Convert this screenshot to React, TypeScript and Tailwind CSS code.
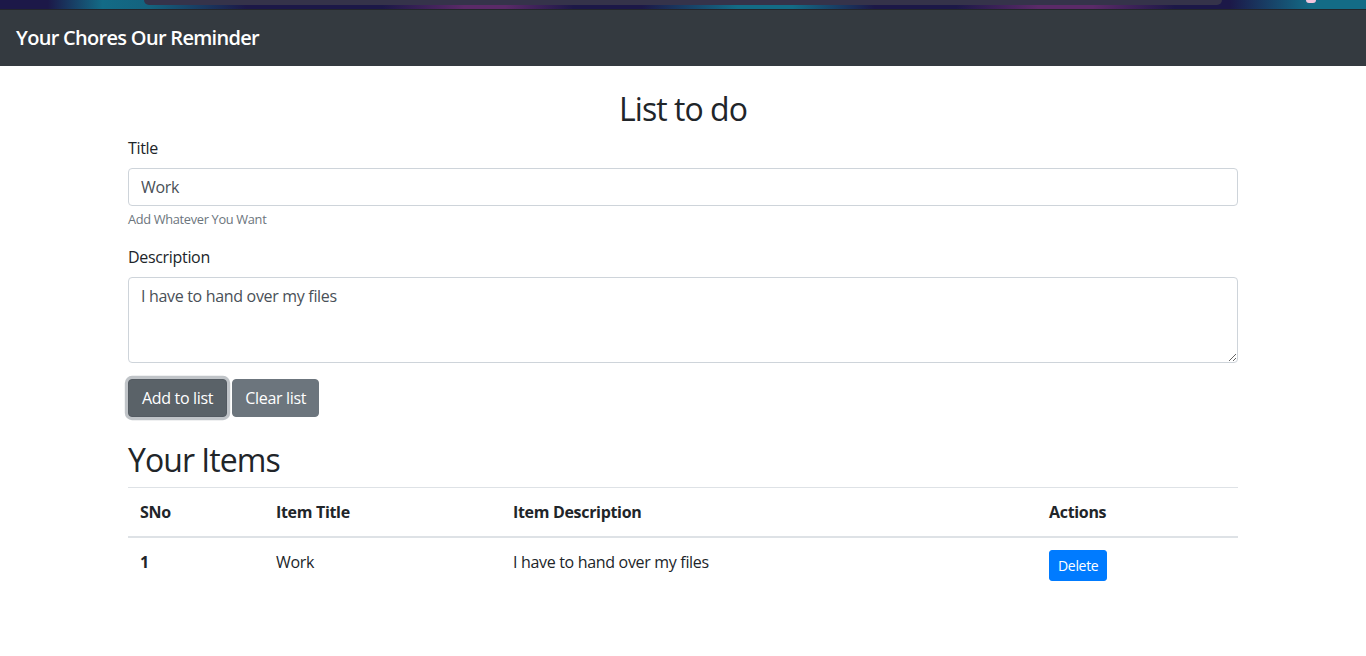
import React from "react";

const font = { fontFamily: '"Open Sans", "Noto Sans", sans-serif' };

function TopStrip() {
  return (
    <div className="relative h-[10px] w-full bg-[linear-gradient(90deg,#1c1848_0%,#1c1848_3.5%,#136b86_7.5%,#14627e_11%,#1c1848_18%,#1c1848_28%,#5b2a68_34%,#5a2a68_37%,#1c1848_42%,#1c1848_47%,#136b86_54%,#136b86_58%,#1c1848_64%,#1c1848_70%,#5b2a68_76%,#5b2a68_80%,#1c1848_86%,#1c1848_90%,#136b86_96%,#136b86_100%)]">
      <div className="flex h-[9px] px-[144px]">
        <div className="h-[5px] flex-1 rounded-b-[8px] bg-[#35334a]" />
      </div>
      <div className="h-px bg-[#23252b]" />
      <div className="absolute right-[50px] top-0 h-[3px] w-[10px] rounded-b-full bg-[#f3c6de]" />
    </div>
  );
}

export default function App() {
  return (
    <div
      className="min-h-screen bg-white tracking-[-0.02em] text-[#212529]"
      style={font}
    >
      <TopStrip />
      <nav className="flex h-[56px] items-center bg-[#343a40] px-4">
        <span className="text-[20px] font-semibold leading-[30px] tracking-[-0.035em] text-white">
          Your Chores Our Reminder
        </span>
      </nav>

      <div className="mx-auto w-[1110px]">
        <h2 className="mb-2 mt-6 text-center text-[32px] font-medium leading-[38px] tracking-[-0.03em]">
          List to do
        </h2>

        <div className="mb-4">
          <label className="mb-2 block text-base leading-6">Title</label>
          <input
            type="text"
            defaultValue="Work"
            className="block h-[38px] w-full rounded-[4px] border border-[#ced4da] px-3 text-base leading-6 text-[#495057] outline-none"
          />
          <small className="mt-1 block text-[12.8px] leading-[19px] text-[#6c757d]">
            Add Whatever You Want
          </small>
        </div>

        <div className="mb-4">
          <label className="mb-2 block text-base leading-6">Description</label>
          <textarea
            rows={3}
            defaultValue="I have to hand over my files"
            className="block h-[86px] w-full rounded-[4px] border border-[#ced4da] px-3 py-[6px] text-base leading-6 tracking-[-0.02em] text-[#495057] outline-none"
          />
        </div>

        <div className="flex gap-[5px]">
          <button className="h-[38px] rounded-[4px] border border-[#545b62] bg-[#5a6268] px-[13px] text-base leading-6 text-white shadow-[0_0_0_3.2px_rgba(130,138,145,0.5)]">
            Add to list
          </button>
          <button className="h-[38px] rounded-[4px] border border-[#6c757d] bg-[#6c757d] px-3 text-base leading-6 text-white">
            Clear list
          </button>
        </div>

        <h2 className="mb-2 mt-6 text-[32px] font-medium leading-[38px] tracking-[-0.03em]">
          Your Items
        </h2>

        <table className="w-full border-collapse text-left text-base">
          <thead>
            <tr>
              <th className="w-[136px] border-b-2 border-t border-[#dee2e6] p-3 font-bold leading-6">
                SNo
              </th>
              <th className="w-[237px] border-b-2 border-t border-[#dee2e6] p-3 font-bold leading-6">
                Item Title
              </th>
              <th className="w-[536px] border-b-2 border-t border-[#dee2e6] p-3 font-bold leading-6">
                Item Description
              </th>
              <th className="border-b-2 border-t border-[#dee2e6] p-3 font-bold leading-6">
                Actions
              </th>
            </tr>
          </thead>
          <tbody>
            <tr>
              <td className="p-3 align-top font-bold leading-6">1</td>
              <td className="p-3 align-top leading-6">Work</td>
              <td className="p-3 align-top leading-6">
                I have to hand over my files
              </td>
              <td className="p-3 align-top leading-6">
                <button className="h-[31px] rounded-[3px] border border-[#007bff] bg-[#007bff] px-2 text-[14px] leading-[21px] text-white">
                  Delete
                </button>
              </td>
            </tr>
          </tbody>
        </table>
      </div>
    </div>
  );
}
